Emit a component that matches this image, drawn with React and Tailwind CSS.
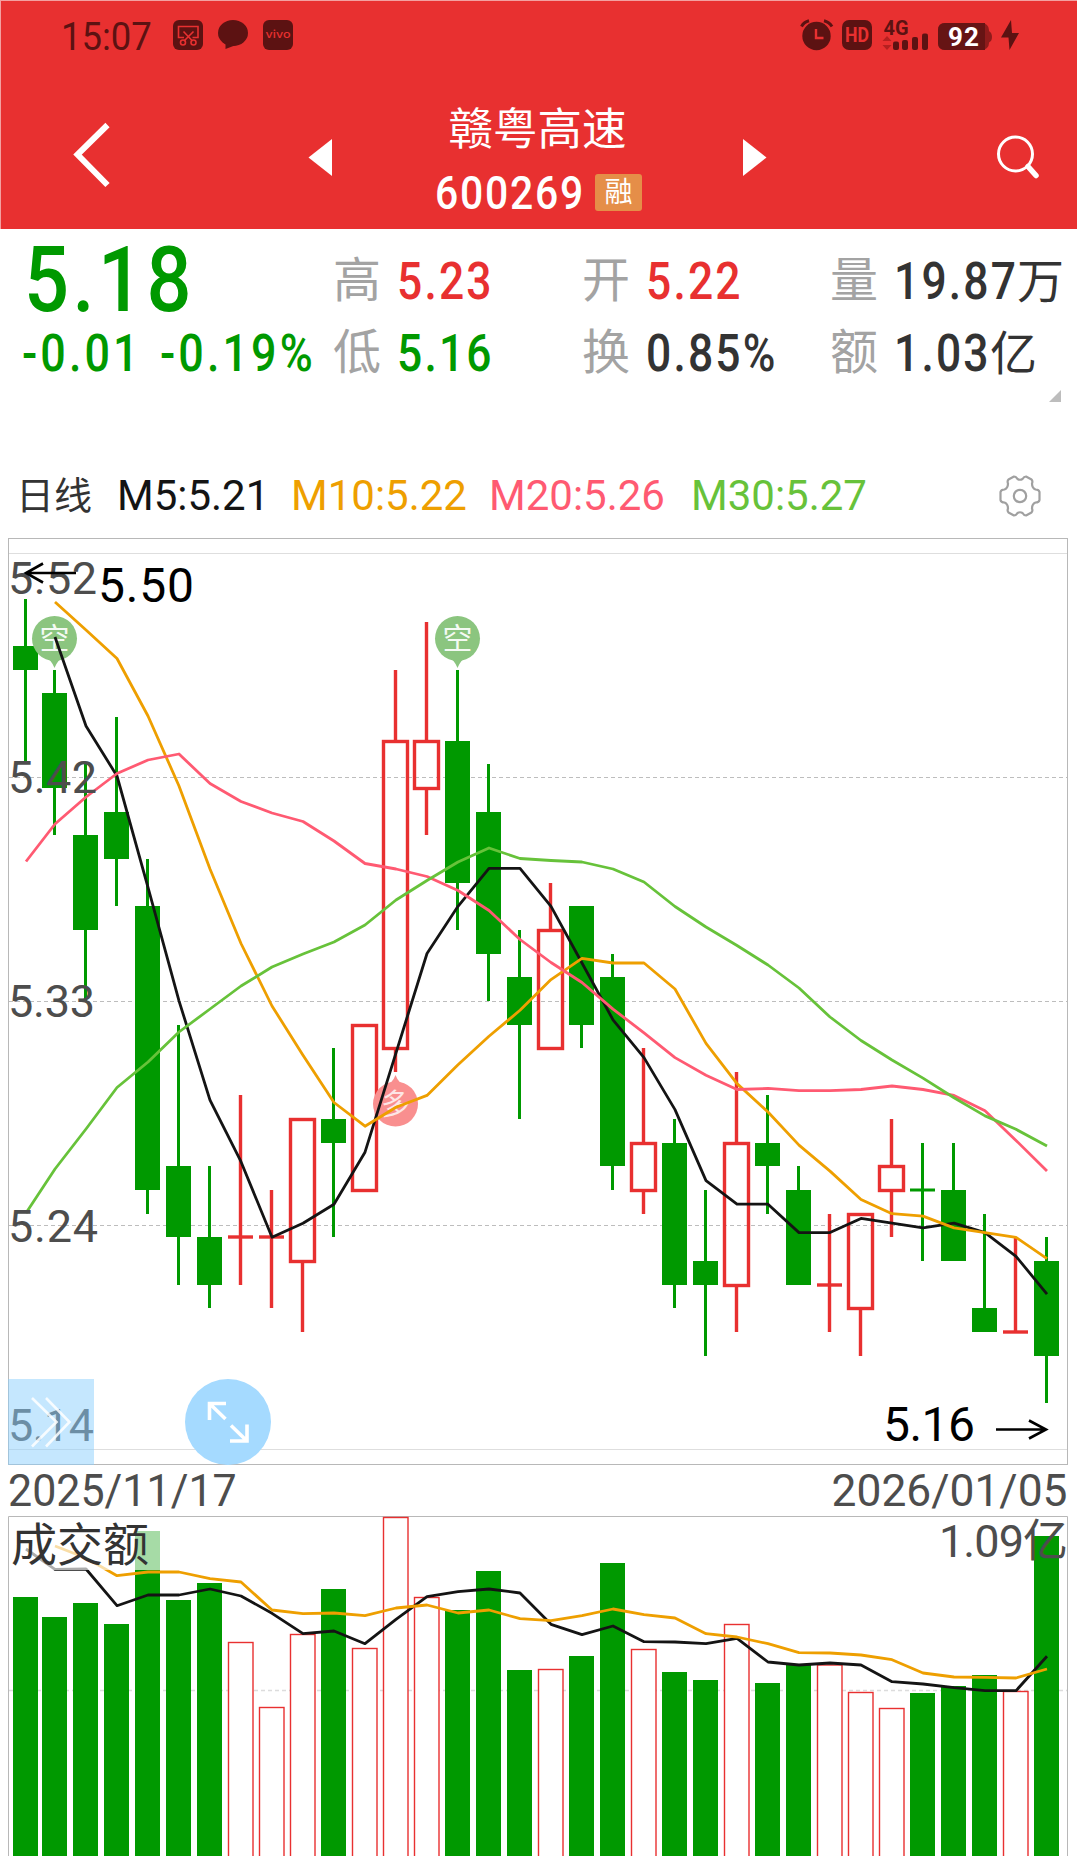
import React from 'react';
import clsx from 'clsx';

const RED = '#e83030';
const GREEN = '#009900';
const BLACK = '#141414';
const ORANGE = '#ee9f00';
const PINK = '#ff5a72';
const LIME = '#67c23a';
const DARK_RED = '#5c1212';

const FONT = 'Roboto, "Noto Sans CJK SC", sans-serif';

// open, high, low, close in cents
const candles = [
  [548, 550, 543, 547], [546, 547, 540, 542], [540, 543, 533, 536], [541, 545, 537, 539],
  [537, 539, 524, 525], [526, 532, 521, 523], [523, 526, 520, 521], [523, 529, 521, 523],
  [523, 525, 520, 523], [522, 528, 519, 528], [528, 531, 523, 527], [525, 532, 525, 532],
  [531, 547, 530, 544], [542, 549, 540, 544], [544, 547, 536, 538], [541, 543, 533, 535],
  [534, 536, 528, 532], [531, 538, 531, 536], [537, 537, 531, 532], [534, 535, 525, 526],
  [525, 531, 524, 527], [527, 528, 520, 521], [522, 525, 518, 521], [521, 530, 519, 527],
  [527, 529, 524, 526], [525, 526, 521, 521], [521, 524, 519, 521], [520, 524, 518, 524],
  [525, 528, 523, 526], [525, 527, 522, 525], [525, 527, 522, 522], [520, 524, 519, 519],
  [519, 523, 519, 519], [522, 523, 516, 518],
];

// days that closed flat or up
const upDays = [7, 8, 9, 11, 12, 13, 17, 20, 23, 26, 27, 28, 32];

const volumeTops = [
  1597, 1617, 1603, 1624, 1531, 1600, 1583, 1642.5, 1707.5, 1634.5, 1589, 1648.5,
  1517.5, 1597.5, 1610, 1571, 1670, 1669.5, 1656, 1563, 1649.5, 1672, 1680, 1624.5,
  1683, 1665, 1665, 1692.5, 1708.5, 1693, 1686, 1675, 1691.5, 1536,
];
const volumeM5 = [
  1549, 1569.3, 1569, 1605.7, 1595, 1595, 1589, 1596, 1613.3, 1633.7, 1631, 1643.7,
  1619.3, 1596.7, 1591.7, 1589, 1593, 1624.3, 1634.7, 1626, 1641.7, 1642, 1643.7, 1638.3,
  1662, 1665, 1663, 1665, 1681.7, 1684, 1687.7, 1690.7, 1690.7, 1656.3,
];
const volumeM10 = [
  null, 1546, 1558, 1575.7, 1572, 1572, 1578.7, 1582, 1610, 1613.7, 1613, 1615.7,
  1608, 1605, 1613, 1610, 1618.7, 1620.7, 1615.7, 1609, 1614.7, 1618, 1633.7, 1637,
  1643.7, 1652.7, 1653, 1655, 1659.7, 1673, 1677, 1677.3, 1678, 1669,
];

// averages that need closes from before the first candle, in plot units
const leads = {
  5: [null, 637, 726, 776],
  10: [null, 602, 630, 658.5, 716, 786, 869, 943.5, 1006],
  20: [
    861.5, 824, 797, 773.5, 760, 754, 783.5, 801.5, 813, 821.5, 841, 863.5, 869, 876.5,
    890.5, 910.5, 939.5, 962.5, 982.5,
  ],
  30: [
    1213, 1169, 1129, 1087.5, 1062, 1032, 1009, 986, 967, 954, 942, 925, 900, 880.5, 862,
    848, 858.5, 860.5, 862, 869, 882, 906.5, 927, 945.5, 965, 988, 1017, 1040.5, 1060,
  ],
};

const xOf = (i) => (i === 0 ? 25.5 : 54.5 + 31 * (i - 1));
const yOf = (cents) => 551.5 + (552 - cents) * 23.65;
const isUp = (i) => upDays.includes(i);

const average = (n) =>
  candles.map((_, i) => {
    if (i < n - 1) return leads[n][i];
    const closes = candles.slice(i - n + 1, i + 1).map((c) => c[3]);
    return yOf(closes.reduce((a, b) => a + b, 0) / n);
  });

const Line = ({ ys, color }) => (
  <polyline
    points={ys
      .map((y, i) => (y === null ? null : `${xOf(i) + 0.5},${y.toFixed(1)}`))
      .filter(Boolean)
      .join(' ')}
    fill="none"
    stroke={color}
    strokeWidth="2.8"
    strokeLinejoin="round"
  />
);

const Candle = ({ i }) => {
  const [open, high, low, close] = candles[i];
  const x = xOf(i);
  const top = Math.round(yOf(Math.max(open, close)));
  const bottom = Math.round(yOf(Math.min(open, close)));
  const color = isUp(i) ? RED : GREEN;
  const width = isUp(i) ? 3.4 : 3;

  return (
    <g stroke={color} strokeWidth={width}>
      {high > Math.max(open, close) && <path d={`M${x} ${Math.round(yOf(high))}V${top}`} />}
      {low < Math.min(open, close) && <path d={`M${x} ${bottom}V${Math.round(yOf(low))}`} />}
      {open === close ? (
        <path d={`M${x - 12.5} ${top}H${x + 12.5}`} />
      ) : isUp(i) ? (
        <rect x={x - 12} y={top + 0.5} width="24" height={bottom - top} fill="none" />
      ) : (
        <rect x={x - 12.5} y={top} width="25" height={bottom - top} fill={color} stroke="none" />
      )}
    </g>
  );
};

const ShortPin = ({ x }) => (
  <g>
    <path d={`M${x - 10} 656Q${x - 3} 660 ${x} 668Q${x + 3} 660 ${x + 10} 656Z`} fill="#8bc57f" />
    <circle cx={x} cy="638.5" r="22.5" fill="#8bc57f" />
    <text x={x} y="649" fontSize="30" textAnchor="middle" fill="#f4faf3">空</text>
  </g>
);

const LongPin = ({ x }) => (
  <g>
    <path d={`M${x - 10} 1086Q${x - 3} 1083 ${x} 1075Q${x + 3} 1083 ${x + 10} 1086Z`} fill="#f98f8f" />
    <circle cx={x} cy="1104" r="22.5" fill="#f98f8f" />
    <text x={x} y="1115" fontSize="29" textAnchor="middle" fill="#fde6e6">多</text>
  </g>
);

const axisLabels = [
  ['5.52', 594, 87],
  ['5.42', 793, 87],
  ['5.33', 1017, 85],
  ['5.24', 1241.5, 88],
  ['5.14', 1440.5, 84],
];

const PriceChart = () => (
  <svg className="block" width="1077" height="936" viewBox="0 530 1077 936" fontFamily={FONT}>
    <rect x="8.5" y="538.5" width="1059" height="926" fill="none" stroke="#b8b8b8" />
    <path d="M9 553.5H1067M9 1449.5H1067" stroke="#dedede" />
    <path d="M9 777.5H1067M9 1001.5H1067M9 1225.5H1067" stroke="#bdbdbd" strokeDasharray="4 3" />

    {candles.map((_, i) => (
      <Candle key={i} i={i} />
    ))}

    <ShortPin x={54.5} />
    <ShortPin x={457.5} />
    <LongPin x={395.5} />

    <Line ys={average(5)} color={BLACK} />
    <Line ys={average(10)} color={ORANGE} />
    <Line ys={average(20)} color={PINK} />
    <Line ys={average(30)} color={LIME} />

    {axisLabels.map(([label, y, width]) => (
      <text key={label} x="8" y={y} fontSize="45" fill="#4d4d4d" textLength={width + 2}>
        {label}
      </text>
    ))}

    <text x="98" y="601.5" fontSize="48" textLength="96">5.50</text>
    <path d="M76 573H26M43 563.5L26 573L43 582.5" fill="none" stroke="#000" strokeWidth="2.6" />
    <text x="883" y="1440.5" fontSize="48" textLength="92">5.16</text>
    <path d="M996 1429.5H1046M1029 1420.5L1046 1429.5L1029 1438.5" fill="none" stroke="#000" strokeWidth="2.6" />

    {/* expand button */}
    <rect x="8" y="1379" width="86" height="86" fill="#8bcffe" fillOpacity="0.5" />
    <path
      d="M32 1398L56.5 1422L32 1446.5M46 1398L69.5 1422L46 1446.5"
      fill="none"
      stroke="#fff"
      strokeOpacity="0.85"
      strokeWidth="2.6"
    />

    {/* full screen button */}
    <circle cx="228" cy="1422" r="43" fill="#a5daff" />
    <path
      d="M226 1403.5H209.5V1420M209.5 1403.5L225.500 1419M230 1441H247V1424.5M247 1441L231 1425.5"
      fill="none"
      stroke="#fff"
      strokeWidth="3.6"
    />
  </svg>
);

const VolumeChart = () => (
  <svg className="block" width="1077" height="343" viewBox="0 1513 1077 343" fontFamily={FONT}>
    <path d="M8.5 1857V1516.5H1067.5V1857" fill="none" stroke="#b8b8b8" />
    <path d="M9 1690.5H1067" stroke="#dcdcdc" strokeWidth="1.6" strokeDasharray="4 3" />
    {volumeTops.map((top, i) =>
      isUp(i) ? (
        <rect key={i} x={xOf(i) - 12} y={top} width="24.5" height="360" fill="#fff" stroke={RED} strokeWidth="1.4" />
      ) : (
        <rect key={i} x={xOf(i) - 12.5} y={top} width="25" height="360" fill={GREEN} />
      )
    )}
    <Line ys={volumeM5} color={BLACK} />
    <Line ys={volumeM10} color={ORANGE} />
    <rect x="9" y="1517" width="151" height="53" fill="#fff" fillOpacity="0.65" />
    <text x="11" y="1560.5" fontSize="46" fill="#333" textLength="138">成交额</text>
    <text x="939" y="1556.5" fontSize="45" fill="#4d4d4d" textLength="129">1.09亿</text>
  </svg>
);

const StatusBar = () => (
  <div className="flex h-[60px] items-start justify-between pr-[57px] pl-[60px] pt-[18px] text-[#5c1212]">
    <div className="flex items-start">
      <span className="mt-[-1px] w-[111px] origin-left scale-x-[0.96] text-[38px] leading-[38px]">15:07</span>
      <svg width="124" height="34" viewBox="172 19 124 34" fill="none">
        <rect x="173" y="20" width="30" height="30" rx="6" fill={DARK_RED} />
        <path d="M184 37.5H178.5V26.500H198V37.5H192.5M183.5 31.5L192.5 41M193.5 31.5L184 41" stroke={RED} strokeWidth="1.6" />
        <circle cx="183" cy="42.5" r="2.5" stroke={RED} strokeWidth="1.6" />
        <circle cx="193.5" cy="42.5" r="2.5" stroke={RED} strokeWidth="1.6" />
        <ellipse cx="233" cy="33" rx="15" ry="13" fill={DARK_RED} />
        <path d="M225.5 42V49L236 45Z" fill={DARK_RED} />
        <rect x="263" y="20" width="30" height="30" rx="6" fill={DARK_RED} />
        <text x="265.5" y="38" fontSize="11" fontFamily="Inter, sans-serif" fontWeight="500" fill={RED} textLength="25" lengthAdjust="spacingAndGlyphs">vivo</text>
      </svg>
    </div>
    <svg className="overflow-visible" width="221" height="34" viewBox="798 19 221 34" fill="none" fontFamily={FONT}>
      <circle cx="815.5" cy="36" r="14.2" fill={DARK_RED} />
      <path d="M800.5 26.5Q803 22 808 20.8M823 20.8Q828 22 831 26.5" stroke={DARK_RED} strokeWidth="3" />
      <path d="M815 29V38H822.5" stroke={RED} strokeWidth="2.4" />
      <rect x="841" y="20" width="30" height="30" rx="7" fill={DARK_RED} />
      <text x="844" y="42" fontSize="20" fontWeight="700" fill={RED} textLength="24" lengthAdjust="spacingAndGlyphs">HD</text>
      <text x="882.5" y="34.5" fontSize="20" fontWeight="700" fill={DARK_RED} textLength="25" lengthAdjust="spacingAndGlyphs">4G</text>
      <path d="M881.5 41L886 36L890.5 41ZM881.5 45L886 50L890.5 45Z" fill="#b52020" />
      <rect x="892" y="41.5" width="6" height="8.5" rx="2" fill={DARK_RED} />
      <rect x="901" y="40" width="6" height="10" rx="2" fill={DARK_RED} />
      <rect x="911" y="37" width="6" height="13" rx="2" fill={DARK_RED} />
      <rect x="921" y="33.5" width="6" height="16.5" rx="2" fill={DARK_RED} />
      <rect x="937" y="23" width="51" height="27" rx="7" fill="#8f1b1b" />
      <path d="M944 23H984V50H944Q937 50 937 43V30Q937 23 944 23Z" fill="#661414" />
      <path d="M988 31Q991 33 991 37Q991 41 988 42.5Z" fill="#8f1b1b" />
      <text x="947" y="46" fontSize="26" fontWeight="700" fill="#fff" textLength="31">92</text>
      <path d="M1010 20L1000 37.5H1007.5L1008.5 50L1018 33H1011Z" fill={DARK_RED} />
    </svg>
  </div>
);

const Header = () => (
  <header className="h-[229px] border-t border-l border-[#f3a0a0] bg-[#e83030]">
    <StatusBar />
    <div className="flex items-start pl-[70px]">
      <svg className="mt-[57px]" width="42" height="74" fill="none">
        <path d="M36.5 7L6.5 36.5L36.5 67" stroke="#fff" strokeWidth="6" />
      </svg>
      <svg className="mt-[78px] ml-[195px]" width="24" height="37" fill="#fff">
        <path d="M0.5 18.5L24 0V37Z" />
      </svg>
      <div className="flex w-[411px] flex-col items-center">
        <h1 className="mt-[41px] text-[44.5px] leading-[56px] text-white">赣粤高速</h1>
        <div className="mt-[16px] ml-[2px] flex h-[37px] items-center">
          <span className="w-[160px] origin-left scale-x-[0.87] text-[47px] leading-[47px] font-medium tracking-[2px] whitespace-nowrap text-white">
            600269
          </span>
          <span className="flex h-[37px] w-[47px] items-center justify-center rounded-[3px] bg-[#e58e48] text-[28px] leading-none text-white">
            融
          </span>
        </div>
      </div>
      <svg className="mt-[78px]" width="24" height="37" fill="#fff">
        <path d="M0 0V37L23.5 18.5Z" />
      </svg>
      <svg className="mt-[70px] ml-[228px]" width="46" height="50" fill="none" stroke="#fff">
        <circle cx="20.5" cy="23" r="17" strokeWidth="3" />
        <path d="M33 35.500L41 44.5" strokeWidth="5.5" strokeLinecap="round" />
      </svg>
    </div>
  </header>
);

const Stat = ({ label, value, unit, color, wide }) => (
  <div className="flex h-[72px] items-center whitespace-nowrap">
    <span className="w-[64px] shrink-0 text-[48px] leading-none text-[#a3a3a3]">{label}</span>
    <span className={clsx('flex items-center text-[51px] leading-none font-medium tracking-[2.5px]', color)}>
      <span className={clsx('origin-left scale-x-[0.87]', wide && 'w-[123px]', unit && !wide && 'w-[96px]')}>{value}</span>
      {unit && <span className="text-[47px] font-normal tracking-normal">{unit}</span>}
    </span>
  </div>
);

const Quote = () => (
  <section className="relative flex h-[238px] pt-[16px]">
    <div className="w-[333px] pl-[24px] text-[#009900]">
      <div className="h-[72px] w-[220px] origin-left scale-x-[0.88] text-[90px] leading-[72px] font-medium tracking-[4px]">5.18</div>
      <div className="ml-[-2px] flex h-[72px] items-center text-[51px] leading-none font-medium tracking-[3.5px] whitespace-nowrap">
        <span className="w-[138px] origin-left scale-x-[0.88]">-0.01</span>
        <span className="w-[160px] origin-left scale-x-[0.88]">-0.19%</span>
      </div>
    </div>
    <div className="w-[249px]">
      <Stat label="高" value="5.23" color="text-[#e83030]" />
      <Stat label="低" value="5.16" color="text-[#009900]" />
    </div>
    <div className="w-[248px]">
      <Stat label="开" value="5.22" color="text-[#e83030]" />
      <Stat label="换" value="0.85%" color="text-[#333333]" />
    </div>
    <div>
      <Stat label="量" value="19.87" unit="万" wide color="text-[#333333]" />
      <Stat label="额" value="1.03" unit="亿" color="text-[#333333]" />
    </div>
    <svg className="absolute top-[161px] left-[1049px]" width="12" height="12" fill="#bdbdbd">
      <path d="M0 12L12 0V12Z" />
    </svg>
  </section>
);

const Legend = () => (
  <section className="flex h-[63px] items-center pb-[6px] pl-[16px] text-[42px] leading-none whitespace-nowrap">
    <span className="w-[101px] text-[38px] text-[#333333]">日线</span>
    <span className="w-[174px] text-[#141414]">M5:5.21</span>
    <span className="w-[198px] text-[#ee9f00]">M10:5.22</span>
    <span className="w-[202px] text-[#ff5a72]">M20:5.26</span>
    <span className="w-[308px] text-[#67c23a]">M30:5.27</span>
    <svg width="42" height="44" viewBox="-21 -22 42 44" fill="none" stroke="#a0a0a0" strokeWidth="2.2" strokeLinejoin="round">
      <path d="M-6 -19.5Q-4 -19.5 -2.5 -17Q0 -15.5 2.5 -17Q4 -19.5 6 -19.5L11.5 -16.5Q13 -15 12 -12.5Q12 -8 15.5 -6.5Q19 -6.5 19.5 -4V4Q19 6.5 15.5 6.5Q12 8 12 12.5Q13 15 11.5 16.5L6 19.5Q4 19.5 2.5 17Q0 15.5 -2.5 17Q-4 19.5 -6 19.5L-11.5 16.5Q-13 15 -12 12.5Q-12 8 -15.5 6.5Q-19 6.5 -19.5 4V-4Q-19 -6.5 -15.5 -6.5Q-12 -8 -12 -12.5Q-13 -15 -11.5 -16.5Z" />
      <circle r="6.2" />
    </svg>
  </section>
);

const DateRange = () => (
  <div className="flex h-[47px] items-center justify-between pt-[2px] pr-[10px] pl-[8px] text-[45px] leading-none text-[#4d4d4d]">
    <span className="origin-left scale-x-[0.955]">2025/11/17</span>
    <span className="origin-right scale-x-[0.985]">2026/01/05</span>
  </div>
);

export default function App() {
  return (
    <div className="h-[1856px] w-[1077px] overflow-hidden bg-white font-[Roboto,'Noto_Sans_CJK_SC',sans-serif]">
      <Header />
      <Quote />
      <Legend />
      <PriceChart />
      <DateRange />
      <VolumeChart />
    </div>
  );
}
